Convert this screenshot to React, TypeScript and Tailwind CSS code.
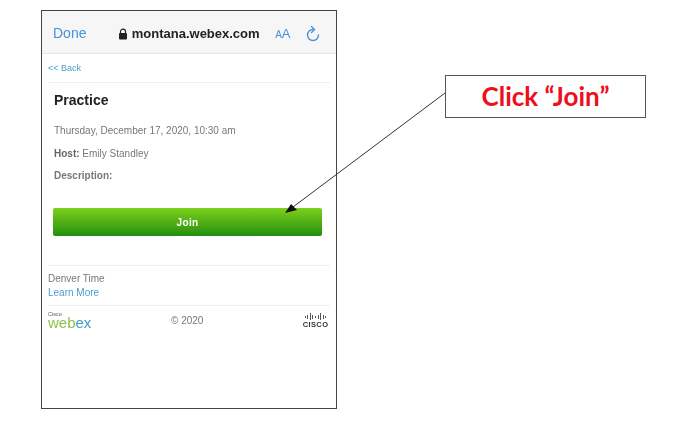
function WebexLogo() {
  return (
    <svg width="44" height="21" viewBox="0 0 44 21" className="shrink-0 font-['Liberation_Sans',sans-serif]">
      <text x="0" y="4" fontSize="5.5" fill="#555">Cisco</text>
      <text x="0" y="16" fontSize="15" stroke="#ffffff" strokeWidth="0">
        <tspan fill="#8cc04a">web</tspan>
        <tspan fill="#3f9fc9">ex</tspan>
      </text>
    </svg>
  );
}

function CiscoLogo() {
  const bars = [2, 4, 7, 4, 2, 4, 7, 4, 2];
  return (
    <div className="flex flex-col items-center gap-[1px] w-[25px]">
      <div className="flex items-center gap-[1.6px] h-[7px]">
        {bars.map((h, i) => (
          <span key={i} className="w-[1px] bg-[#555]" style={{ height: h }} />
        ))}
      </div>
      <span className="text-[7.5px] leading-[7px] font-bold text-[#333] tracking-[0.4px]">CISCO</span>
    </div>
  );
}

function LockIcon() {
  return (
    <svg width="10" height="12" viewBox="0 0 10 12" className="mr-[4px] shrink-0">
      <path d="M2.5 5.5V3.6a2.5 2.5 0 0 1 5 0v1.9" fill="none" stroke="#222" strokeWidth="1.2" />
      <rect x="1" y="5" width="8" height="6.5" rx="1" fill="#222" />
    </svg>
  );
}

function ReloadIcon() {
  return (
    <svg width="14" height="17" viewBox="0 0 14 17" className="shrink-0">
      <path d="M7 4.5A5.5 5.5 0 1 0 12.5 10" fill="none" stroke="#4a8fd8" strokeWidth="1.4" strokeLinecap="round" />
      <path d="M5.5 1.5 8.5 4.5 5.5 7.5" fill="none" stroke="#4a8fd8" strokeWidth="1.4" strokeLinecap="round" strokeLinejoin="round" />
    </svg>
  );
}

export default function App() {
  return (
    <div className="relative w-[693px] h-[428px] bg-white overflow-hidden flex items-start pt-[10px] pl-[41px] font-['Liberation_Sans',sans-serif]">
      <div className="w-[296px] h-[399px] border border-[#444] flex flex-col shrink-0">
        <div className="h-[43px] bg-[#f6f6f6] border-b border-[#e4e4e4] flex items-center pt-[3px] pl-[11px] pr-[16px] shrink-0 blur-[0.3px]">
          <span className="text-[14px] text-[#4a8fd8] w-[65px]">Done</span>
          <LockIcon />
          <span className="text-[13px] font-bold text-[#222] w-[144px] whitespace-nowrap">montana.webex.com</span>
          <span className="text-[#4a8fd8] text-[13px] font-medium w-[31px] whitespace-nowrap">
            <span className="text-[10px]">A</span>A
          </span>
          <ReloadIcon />
        </div>

        <div className="px-[6px] pt-[8px] flex-1 flex flex-col blur-[0.3px]">
          <a className="text-[9px] leading-[12px] text-[#4aa0c8]">&lt;&lt; Back</a>
          <div className="mt-[8px] h-px bg-[#eeeeee]" />

          <div className="pl-[5px] pr-[6px]">
            <h1 className="mt-[9px] pl-px text-[14px] leading-[16px] font-bold text-[#222]">Practice</h1>
            <p className="mt-[17px] pl-px text-[10px] leading-[12px] text-[#777]">Thursday, December 17, 2020, 10:30 am</p>
            <p className="mt-[11px] pl-px text-[10px] leading-[12px] text-[#777]">
              <b className="text-[#666]">Host:</b> Emily Standley
            </p>
            <p className="mt-[10px] pl-px text-[10px] leading-[12px] font-bold text-[#777]">Description:</p>
            <button className="mt-[26px] w-[269px] h-[28px] rounded-[2px] bg-gradient-to-b from-[#7bd11c] to-[#1f8f10] text-white text-[10px] font-bold tracking-[0.3px]">
              Join
            </button>
          </div>

          <div className="mt-[29px] h-px bg-[#f0f0f0]" />
          <p className="mt-[6px] text-[10px] leading-[14px] text-[#777]">Denver Time</p>
          <a className="text-[10px] leading-[14px] text-[#4a9fd0]">Learn More</a>
          <div className="mt-[5px] h-px bg-[#f0f0f0]" />
          <div className="mt-[6px] flex items-start pr-[2px]">
            <WebexLogo />
            <span className="ml-[79px] mt-[1px] text-[10px] text-[#777]">© 2020</span>
            <div className="ml-auto mt-[1px]"><CiscoLogo /></div>
          </div>
        </div>
      </div>

      <div className="ml-[108px] mt-[65px] w-[201px] h-[43px] border border-[#555] flex items-center justify-center font-['Lato',sans-serif] font-bold text-[26px] text-[#ee0f1c] shrink-0">
        Click “Join”
      </div>

      {/* arrow sits over the phone and the callout */}
      <svg className="absolute left-0 top-0 pointer-events-none" width="693" height="428">
        <line x1="445" y1="93" x2="293" y2="207" stroke="#333" strokeWidth="1" />
        <polygon points="285,213 291,204 297,210" fill="#111" />
      </svg>
    </div>
  );
}
